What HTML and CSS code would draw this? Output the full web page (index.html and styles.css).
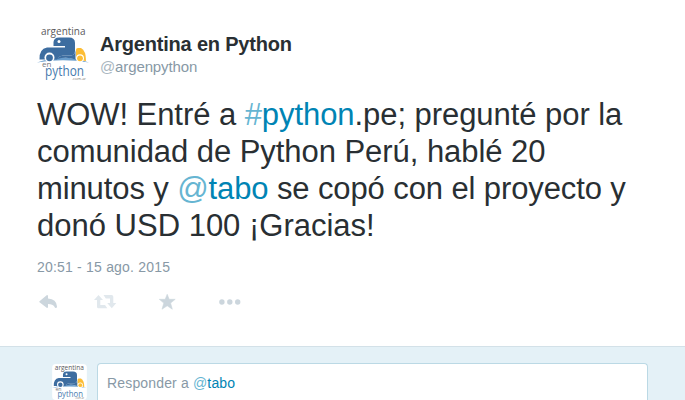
FILE: index.html
```html
<!DOCTYPE html>
<html lang="es">
<head>
<meta charset="utf-8">
<title>Argentina en Python</title>
<link rel="stylesheet" href="styles.css">
</head>
<body>
<svg class="defs" width="0" height="0" aria-hidden="true">
  <symbol id="logo" viewBox="0 0 53 55">
    <rect width="53" height="55" fill="#fff"/>
    <text x="4" y="8.5" font-size="10" textLength="44.5" lengthAdjust="spacingAndGlyphs" fill="#59595c">argentina</text>
    <path d="M0 36.500Q26 27 52 36.500Q26 32 0 36.500Z" fill="#699dcc"/>
    <path d="M2.500 33.500Q2 23 10 21.500H28V20H16.500V16Q17 11.500 22 11.500H32Q38 11.500 38 17V25Q38 29 34 29.500H26Q22 30 20 33.500Z" fill="#3d6da0"/>
    <path d="M20 33Q23 29 27 29.500H34Q38 29 38.500 24V33.500Q30 30.500 20 33Z" fill="#3d6da0"/>
    <circle cx="22" cy="15.500" r="1.500" fill="#fff"/>
    <circle cx="12.500" cy="31.500" r="5" fill="#fff"/>
    <circle cx="12.500" cy="31.800" r="3.400" fill="#3d6da0"/>
    <path d="M39 34V23.500Q39 22 41 22H44Q49 24.500 49 35Z" fill="#fcbd35"/>
    <circle cx="43" cy="32.300" r="4" fill="#fff"/>
    <circle cx="43" cy="32.300" r="2.900" fill="#fcbd35"/>
    <text x="5" y="41" font-size="8" fill="#77787c">en</text>
    <text x="8" y="50.300" font-size="14.500" textLength="39" lengthAdjust="spacingAndGlyphs" fill="#477bae">python</text>
    <text x="35" y="53.500" font-size="4" fill="#777">.com.ar</text>
  </symbol>
</svg>
<article class="tweet">
  <header class="author">
    <svg class="avatar"><use href="#logo"/></svg>
    <div class="names">
      <div class="name">Argentina en Python</div>
      <div class="handle"><span class="at">@</span>argenpython</div>
    </div>
  </header>
  <p class="message">
    <span class="line l1">WOW! Entré a <a><s>#</s>python</a>.pe; pregunté por la</span>
    <span class="line l2">comunidad de Python Perú, hablé 20</span>
    <span class="line l3">minutos y <a><s>@</s>tabo</a> se copó con el proyecto y</span>
    <span class="line l4">donó USD 100 ¡Gracias!</span>
  </p>
  <div class="date">20:51 - 15 ago. 2015</div>
  <div class="actions">
    <svg class="reply" width="19" height="15" viewBox="0 0 19 15"><path d="M.5 6.3 8 0Q9 0 9 1V3.5Q17.5 4 18 11.5Q18 13 16.8 13Q16 13 15.3 11.5Q14 9 9 9V12Q9 13 8 13L.5 7.2Q0 6.8.5 6.3Z"/></svg>
    <svg class="retweet" width="23" height="14" viewBox="0 0 23 14"><path d="M4.5 0 9 5H6.3V10H11L13.3 13.3H4.5Q3 13.3 3 11.8V5H0ZM9.5 0H17.5Q19.3 0 19.3 1.8V8H22.3L17.8 13.3 13.2 8H16V3.5H11.8Z"/></svg>
    <svg class="star" width="17" height="16" viewBox="0 0 17 16"><path stroke="#ccd6dd" stroke-width=".6" stroke-linejoin="round" d="M8.2 .3 10.2 5.3H16.2L11.6 9.1 13.3 15.2 8.2 11.8 3 15.2 4.8 9.1.3 5.3H6.2Z"/></svg>
    <svg class="more" width="22" height="6" viewBox="0 0 22 6"><circle cx="2.9" cy="3" r="2.7"/><circle cx="10.8" cy="3" r="2.7"/><circle cx="18.7" cy="3" r="2.7"/></svg>
  </div>
</article>
<footer class="reply-area">
  <svg class="avatar-small"><use href="#logo"/></svg>
  <div class="reply-box"><span class="prompt">Responder a <a><s>@</s>tabo</a></span></div>
</footer>
</body>
</html>
```
FILE: styles.css
```css
* { box-sizing: border-box; }
body {
  margin: 0;
  height: 400px;
  overflow: hidden;
  display: flex;
  flex-direction: column;
  background: #fff;
  color: #292f33;
  font-family: "Liberation Sans", Arial, sans-serif;
}
s { text-decoration: none; color: #66b5d2; }
a { color: #0084b4; }
.defs { position: absolute; font-family: "Open Sans", sans-serif; }
.tweet { height: 346px; flex: none; padding: 26px 37px 0; }
.author { display: flex; height: 55px; }
.avatar, .avatar-small { font-family: "Open Sans", sans-serif; }
.avatar { width: 53px; height: 55px; flex: none; }
.names { padding: 7px 0 0 10px; }
.name { font-size: 20px; line-height: 23px; font-weight: bold; white-space: nowrap; letter-spacing: -.2px; }
.handle { font-size: 15px; line-height: 21px; color: #8899a6; white-space: nowrap; letter-spacing: -.12px; }
.at { color: #a9b6c0; }
.message { margin: 15px 0 0; font-size: 31px; line-height: 37px; }
.line { display: block; white-space: nowrap; }
.l1 { letter-spacing: -.06px; }
.l2 { letter-spacing: -.05px; }
.l3 { letter-spacing: -.11px; }
.date { margin-top: 14px; font-size: 14px; line-height: 18px; color: #8899a6; letter-spacing: .2px; }
.actions { display: flex; align-items: center; margin-top: 17px; height: 18px; fill: #ccd6dd; }
.reply { margin-left: 2px; }
.retweet { margin-left: 36px; fill: #e1e8ed; }
.star { margin-left: 42px; }
.more { margin-left: 43px; }
.reply-area {
  flex: 1;
  display: flex;
  padding: 16px 37px 0 52px;
  background: #e4f1f7;
  border-top: 1px solid #d3e1e8;
}
.avatar-small { width: 35px; height: 36px; margin-top: 1px; border-radius: 4px; flex: none; }
.reply-box {
  flex: 1;
  height: 37px;
  margin-left: 10px;
  padding: 9px 9px 0;
  background: #fff;
  border: 1px solid #bbd9e5;
  border-bottom: 0;
  border-radius: 4px 4px 0 0;
  color: #8899a6;
  font-size: 14px;
  line-height: 20px;
  letter-spacing: .16px;
}
```
